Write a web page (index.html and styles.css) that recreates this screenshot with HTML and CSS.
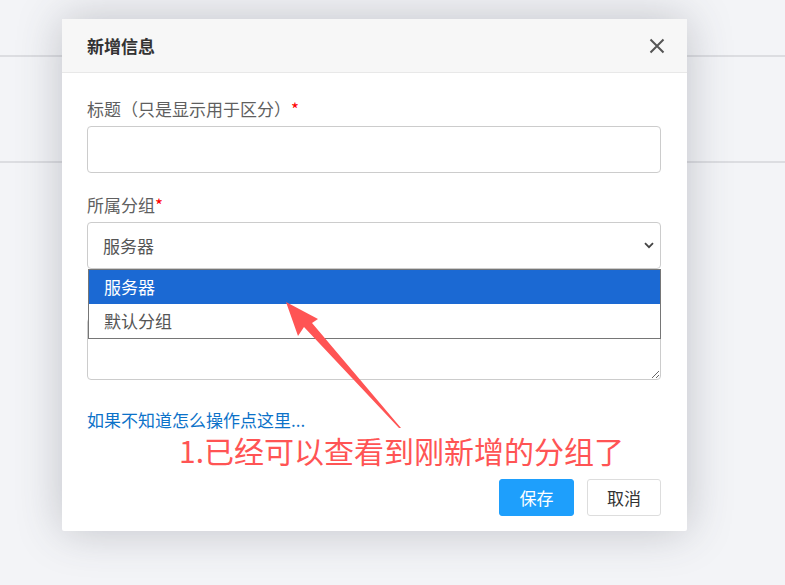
FILE: index.html
```html
<!DOCTYPE html>
<html>
	<head>
		<meta charset="UTF-8">
		<title>新增信息</title>
		<link rel="stylesheet" href="styles.css">
	</head>
	<body>
		<div class="page">
			<div class="row"></div>
			<div class="row"></div>
		</div>
		<div class="modal">
			<div class="modal-head">
				<span class="modal-title">新增信息</span>
				<svg class="close" width="16" height="16" viewBox="0 0 16 16">
					<path d="M1.5 1.5L14.5 14.5M14.5 1.5L1.5 14.5" stroke="#555" stroke-width="2" fill="none"/>
				</svg>
			</div>
			<div class="modal-body">
				<div class="formitem">
					<label>标题（只是显示用于区分）<em>*</em></label>
					<div class="input"></div>
				</div>
				<div class="formitem">
					<label>所属分组<em>*</em></label>
					<div class="select">
						<span>服务器</span>
						<svg width="10" height="7" viewBox="0 0 10 7">
							<path d="M1 1.2L5 5.2L9 1.2" stroke="#444" stroke-width="1.8" fill="none"/>
						</svg>
					</div>
					<ul class="options">
						<li class="active">服务器</li>
						<li>默认分组</li>
					</ul>
				</div>
				<div class="formitem">
					<label></label>
					<textarea class="textarea"></textarea>
				</div>
				<a class="help" href="#">如果不知道怎么操作点这里...</a>
				<div class="actions">
					<button class="btn btn-primary">保存</button>
					<button class="btn">取消</button>
				</div>
			</div>
		</div>
		<svg class="arrow" width="785" height="585" viewBox="0 0 785 585">
			<polygon points="286,302 318,319 312,323 401,428 399,428 304,327 298,336" fill="#ff5454"/>
		</svg>
		<div class="note">1.已经可以查看到刚新增的分组了</div>
	</body>
</html>
```
FILE: styles.css
```css
* {
	margin: 0;
	padding: 0;
	box-sizing: border-box;
}
body {
	width: 785px;
	height: 585px;
	overflow: hidden;
	background-color: #f3f4f7;
	font-family: "Noto Sans CJK SC", "Noto Sans", sans-serif;
	font-size: 17px;
	color: #333;
	position: relative;
}
.page {
	padding-top: 55px;
}
.row {
	height: 106px;
	border-top: 2px solid #dcdde1;
}
.modal {
	position: absolute;
	left: 62px;
	top: 19px;
	width: 625px;
	height: 512px;
	background-color: #fff;
	border-radius: 2px;
	box-shadow: 0 0 45px rgba(60, 65, 80, 0.28);
}
.modal-head {
	height: 54px;
	background-color: #f7f7f7;
	border-bottom: 1px solid #e8e8e8;
	display: flex;
	align-items: center;
	justify-content: space-between;
	padding: 0 22px 0 25px;
}
.modal-title {
	font-weight: bold;
	font-size: 17px;
	color: #333;
}
.modal-body {
	padding: 24px 26px 0 25px;
}
.formitem {
	margin-bottom: 20px;
	position: relative;
}
.formitem label {
	display: block;
	height: 24px;
	line-height: 24px;
	color: #5f5f5f;
	margin-bottom: 5px;
}
.formitem label em {
	font-style: normal;
	color: #f00;
}
.input,
.select {
	height: 47px;
	border: 1px solid #ccc;
	border-radius: 4px;
}
.select {
	display: flex;
	align-items: center;
	justify-content: space-between;
	padding: 0 6px 0 15px;
	color: #555;
}
.options {
	position: absolute;
	left: 1px;
	right: 0;
	top: 76px;
	list-style: none;
	border: 1px solid #767676;
	background-color: #fff;
	z-index: 2;
}
.options li {
	height: 34px;
	line-height: 34px;
	padding-left: 15px;
	color: #555;
}
.options li.active {
	background-color: #1b69d3;
	color: #fff;
}
.textarea {
	display: block;
	width: 100%;
	height: 62px;
	border: 1px solid #ccc;
	border-radius: 4px;
	font-family: inherit;
	resize: vertical;
}
.help {
	display: block;
	margin-top: 28px;
	height: 24px;
	line-height: 24px;
	color: #0c72c9;
	text-decoration: none;
}
.actions {
	display: flex;
	justify-content: flex-end;
	gap: 13px;
	margin-top: 47px;
}
.btn {
	height: 37px;
	width: 74px;
	border: 1px solid #ddd;
	border-radius: 3px;
	background-color: #fff;
	color: #333;
	font-family: inherit;
	font-size: 17px;
}
.btn-primary {
	width: 75px;
	border-color: #1e9ffc;
	background-color: #1e9ffc;
	color: #fff;
}
.arrow {
	position: absolute;
	left: 0;
	top: 0;
	z-index: 3;
}
.note {
	position: absolute;
	left: 179px;
	top: 432px;
	font-size: 30px;
	line-height: 36px;
	color: #ff5454;
	text-shadow: 0 0 2px #fff, 0 0 2px #fff;
	white-space: nowrap;
	z-index: 3;
}
```
